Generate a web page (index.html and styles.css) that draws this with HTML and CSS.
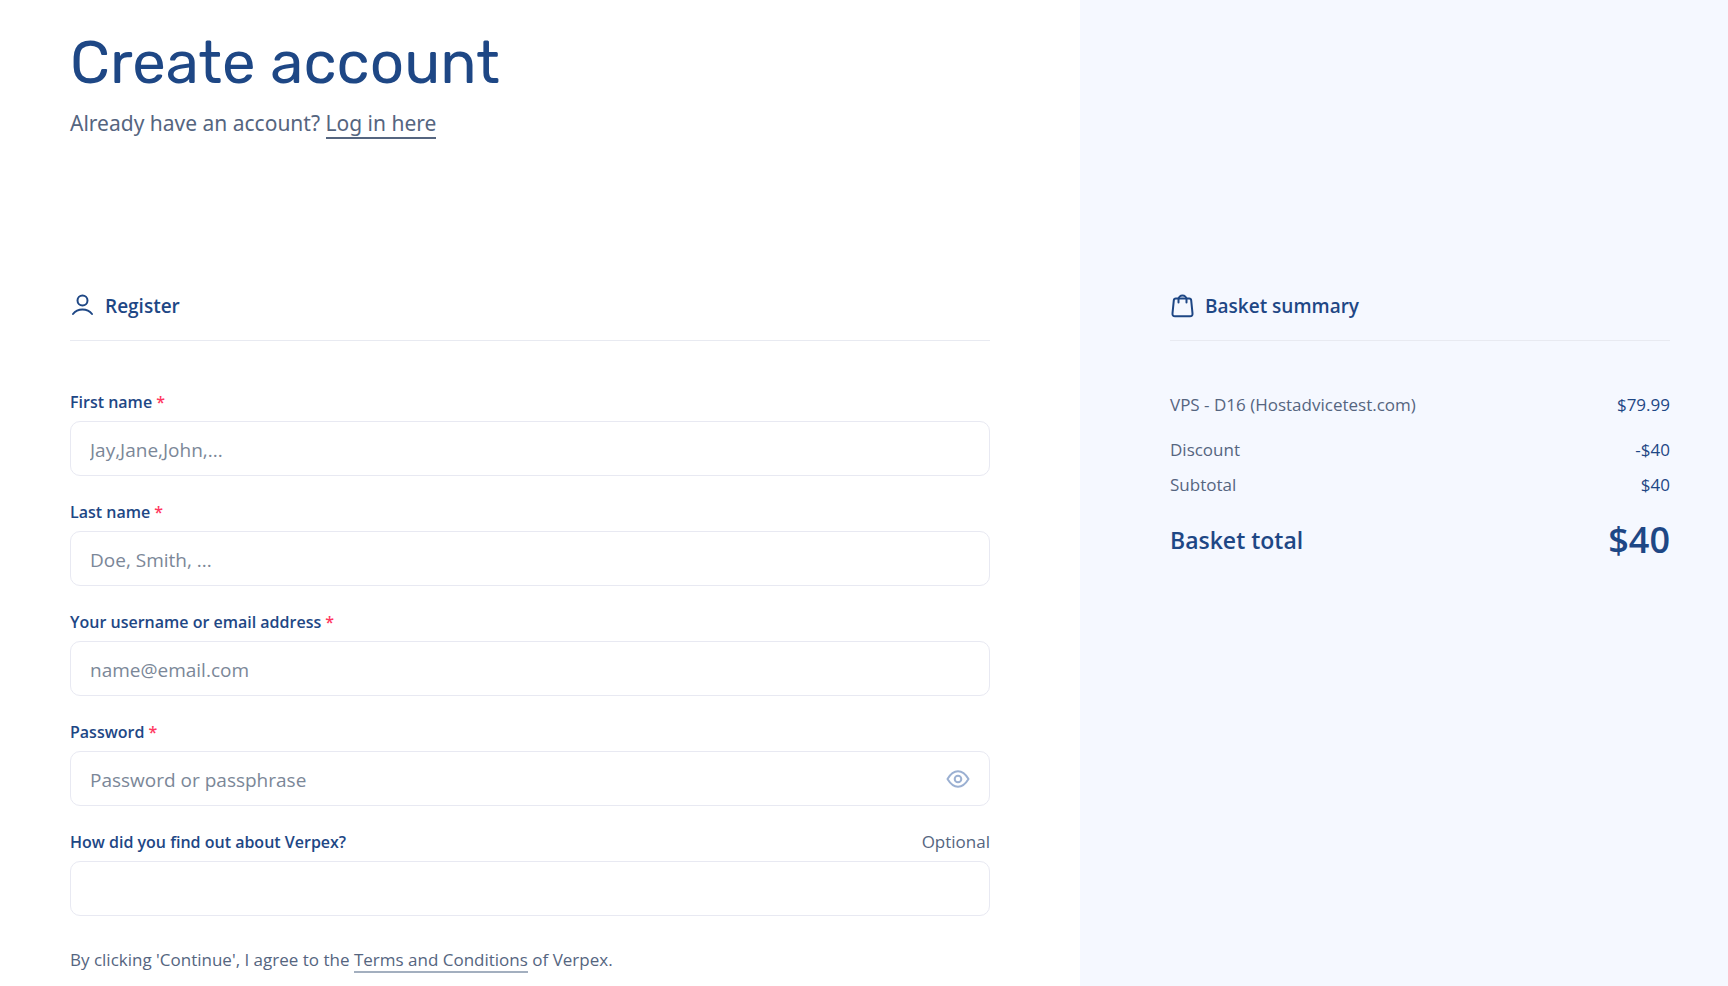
FILE: index.html
```html
<!DOCTYPE html>
<html lang="en">
<head>
<meta charset="utf-8">
<meta name="viewport" content="width=device-width, initial-scale=1">
<title>Create account</title>
<link rel="stylesheet" href="styles.css">
</head>
<body>
<div class="page">
  <main class="main">
    <header class="intro">
      <h1 class="title">Create account</h1>
      <p class="login">Already have an account? <a class="link" href="#login">Log in here</a></p>
    </header>
    <form class="form">
      <h2 class="section-title">
        <svg class="icon" viewBox="0 0 24 24" aria-hidden="true"><circle cx="12.500" cy="6.500" r="5"/><path d="M3 20c2.300-3 5.600-4.500 9.500-4.500S19.700 17 22 20"/></svg>
        Register
      </h2>
      <div class="fields">
        <div class="field">
          <div class="label-row"><label class="label" for="first">First name <span class="required">*</span></label></div>
          <input class="input" id="first" type="text" placeholder="Jay,Jane,John,...">
        </div>
        <div class="field">
          <div class="label-row"><label class="label" for="last">Last name <span class="required">*</span></label></div>
          <input class="input" id="last" type="text" placeholder="Doe, Smith, ...">
        </div>
        <div class="field">
          <div class="label-row"><label class="label" for="email">Your username or email address <span class="required">*</span></label></div>
          <input class="input" id="email" type="text" placeholder="name@email.com">
        </div>
        <div class="field">
          <div class="label-row"><label class="label" for="password">Password <span class="required">*</span></label></div>
          <div class="password">
            <input class="input" id="password" type="password" placeholder="Password or passphrase">
            <button class="reveal" type="button" aria-label="Show password">
              <svg class="icon" viewBox="0 0 24 24" aria-hidden="true"><path d="M1.500 12C4.500 7 8 4.300 12 4.300S19.500 7 22.500 12C19.500 17 16 19.700 12 19.700S4.500 17 1.500 12Z"/><circle cx="12" cy="12" r="3.300"/></svg>
            </button>
          </div>
        </div>
        <div class="field">
          <div class="label-row"><label class="label" for="source">How did you find out about Verpex?</label><span class="optional">Optional</span></div>
          <input class="input" id="source" type="text">
        </div>
      </div>
      <p class="terms">By clicking 'Continue', I agree to the <a class="link link-soft" href="#terms">Terms and Conditions</a> of Verpex.</p>
    </form>
  </main>
  <aside class="basket">
    <h2 class="section-title">
      <svg class="icon" viewBox="0 0 24 24" aria-hidden="true"><path d="M5.800 4.500h13.400a2 2 0 0 1 2 1.800l1.300 13c.2 2-.8 3-2.500 3H5c-1.700 0-2.700-1-2.500-3l1.300-13a2 2 0 0 1 2-1.800Z"/><path d="M8.500 8.500V5.500a4 4 0 0 1 8 0v3"/></svg>
      Basket summary
    </h2>
    <dl class="summary">
      <div class="row row-item"><dt>VPS - D16 (Hostadvicetest.com)</dt><dd>$79.99</dd></div>
      <div class="row"><dt>Discount</dt><dd>-$40</dd></div>
      <div class="row"><dt>Subtotal</dt><dd>$40</dd></div>
      <div class="row row-total"><dt>Basket total</dt><dd>$40</dd></div>
    </dl>
  </aside>
</div>
</body>
</html>
```
FILE: styles.css
```css
* {
  box-sizing: border-box;
}

body {
  margin: 0;
  background: #fff;
  color: #55657f;
  font-family: "Segoe UI", "Open Sans", sans-serif;
  font-size: 17px;
  line-height: 24px;
}

h1, h2, p, dl, dd {
  margin: 0;
}

.page {
  display: grid;
  grid-template-columns: 5fr 3fr;
  min-height: 100vh;
}

.main {
  padding: 25px 90px 12px 70px;
}

.intro {
  min-height: 266px;
}

.title {
  color: #1e4785;
  font-family: Rubik, Roboto, sans-serif;
  font-size: 60px;
  font-weight: 400;
  line-height: 76px;
}

.login {
  padding-top: 7px;
  font-family: "Segoe UI", "Noto Sans", sans-serif;
  font-size: 21px;
  line-height: 30px;
}

.link {
  color: inherit;
  text-decoration: none;
  border-bottom: 2px solid #55657f;
}

.link-soft {
  border-bottom-color: #a3afbf;
}

.section-title {
  display: flex;
  align-items: center;
  gap: 11px;
  padding-bottom: 19px;
  border-bottom: 1px solid #e8eaf1;
  color: #1e4785;
  font-size: 19px;
  font-weight: 600;
  line-height: 30px;
}

.icon {
  width: 24px;
  height: 24px;
  flex: none;
  fill: none;
  stroke: currentColor;
  stroke-width: 2;
  stroke-linecap: round;
  stroke-linejoin: round;
}

.fields {
  display: grid;
  gap: 24px;
  padding-top: 49px;
}

.field {
  display: grid;
  gap: 7px;
}

.label-row {
  display: flex;
  justify-content: space-between;
}

.label {
  color: #1e4785;
  font-size: 16px;
  font-weight: 600;
}

.required {
  color: #ff3860;
}

.input {
  width: 100%;
  height: 55px;
  padding: 2px 19px 0;
  border: 1px solid #e8e9f2;
  border-radius: 10px;
  background: #fff;
  color: #1e4785;
  font-family: inherit;
  font-size: 19px;
}

.input::placeholder {
  color: #7b8798;
  opacity: 1;
}

.password {
  position: relative;
}

.reveal {
  position: absolute;
  top: 0;
  right: 20px;
  height: 100%;
  padding: 0;
  border: 0;
  background: none;
  color: #9bb0d2;
}

.reveal .icon {
  display: block;
}

.terms {
  padding-top: 32px;
}

.basket {
  padding: 291px 58px 24px 90px;
  background: #f5f8ff;
}

.summary {
  padding-top: 52px;
}

.row {
  display: flex;
  justify-content: space-between;
  align-items: center;
  padding-bottom: 11px;
}

.row-item {
  padding-bottom: 21px;
}

.row dd {
  color: #1e4785;
}

.row-total {
  padding-top: 8px;
  color: #1e4785;
  font-size: 23px;
  font-weight: 600;
  line-height: 48px;
}

.row-total dd {
  font-size: 36px;
}
```
